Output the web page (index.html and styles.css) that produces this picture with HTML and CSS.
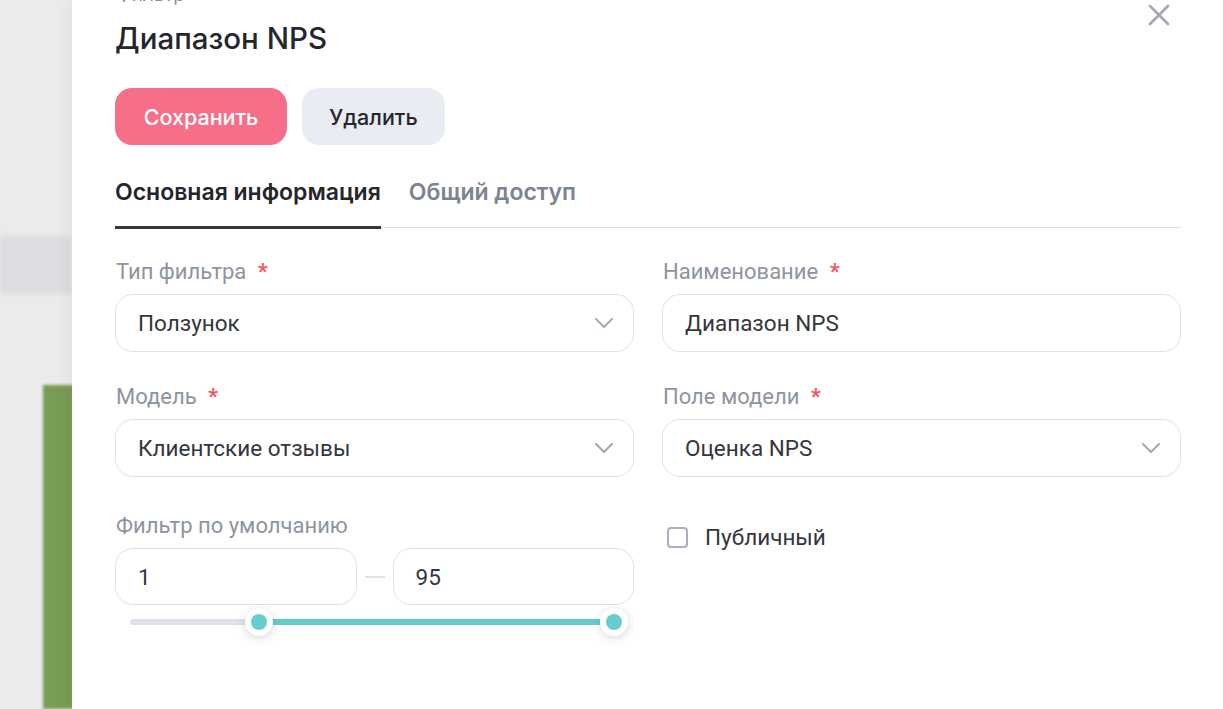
FILE: index.html
```html
<!DOCTYPE html>
<html lang="ru">
<head>
<meta charset="utf-8">
<title>Диапазон NPS</title>
<link rel="stylesheet" href="styles.css">
</head>
<body>
<div class="page">
  <div class="backdrop">
    <div class="bd-top"></div>
    <div class="bd-band"></div>
    <div class="bd-gap"></div>
    <div class="bd-row"><div class="bd-green"></div></div>
  </div>
  <div class="panel">
    <button class="close" aria-label="Закрыть">
      <svg width="24" height="24" viewBox="0 0 24 24"><path d="M3 3L21 21M21 3L3 21" stroke="#a2a6b8" stroke-width="2.6" stroke-linecap="round"/></svg>
    </button>
    <div class="head">
      <div class="kicker">Фильтр</div>
      <h1 class="title">Диапазон NPS</h1>
    </div>
    <div class="actions">
      <button class="btn btn-primary">Сохранить</button>
      <button class="btn btn-secondary">Удалить</button>
    </div>
    <div class="tabs">
      <div class="tab tab-active">Основная информация</div>
      <div class="tab">Общий доступ</div>
    </div>
    <div class="grid">
      <div class="field">
        <div class="label">Тип фильтра <span class="req">*</span></div>
        <div class="control select"><span>Ползунок</span><svg class="chev" width="20" height="12" viewBox="0 0 20 12"><path d="M2 2L10 10L18 2" fill="none" stroke="#a2a6b8" stroke-width="2" stroke-linecap="round" stroke-linejoin="round"/></svg></div>
      </div>
      <div class="field">
        <div class="label">Наименование <span class="req">*</span></div>
        <div class="control"><span>Диапазон NPS</span></div>
      </div>
      <div class="field">
        <div class="label">Модель <span class="req">*</span></div>
        <div class="control select"><span>Клиентские отзывы</span><svg class="chev" width="20" height="12" viewBox="0 0 20 12"><path d="M2 2L10 10L18 2" fill="none" stroke="#a2a6b8" stroke-width="2" stroke-linecap="round" stroke-linejoin="round"/></svg></div>
      </div>
      <div class="field">
        <div class="label">Поле модели <span class="req">*</span></div>
        <div class="control select"><span>Оценка NPS</span><svg class="chev" width="20" height="12" viewBox="0 0 20 12"><path d="M2 2L10 10L18 2" fill="none" stroke="#a2a6b8" stroke-width="2" stroke-linecap="round" stroke-linejoin="round"/></svg></div>
      </div>
      <div class="field row3">
        <div class="label">Фильтр по умолчанию</div>
        <div class="range-inputs">
          <div class="control small"><span>1</span></div>
          <div class="dash"></div>
          <div class="control small"><span>95</span></div>
        </div>
        <div class="slider">
          <div class="track-off" style="width: 125px"></div>
          <div class="thumb"><div class="dot"></div></div>
          <div class="track-on"></div>
          <div class="thumb"><div class="dot"></div></div>
        </div>
      </div>
      <div class="field row3 check-field">
        <label class="check"><span class="box"></span><span>Публичный</span></label>
      </div>
    </div>
  </div>
</div>
</body>
</html>
```

FILE: styles.css
```css
* { box-sizing: border-box; }
html, body { margin: 0; padding: 0; }
body {
  width: 1223px;
  height: 709px;
  overflow: hidden;
  font-family: "Roboto", "Inter", sans-serif;
  color: #34363b;
}
.page {
  display: flex;
  height: 709px;
}
.backdrop {
  width: 72px;
  flex: none;
  background: #ebebeb;
  display: flex;
  flex-direction: column;
  overflow: hidden;
}
.bd-top { height: 236px; }
.bd-band { height: 58px; background: #dcdde1; filter: blur(2px); }
.bd-gap { height: 91px; }
.bd-row { flex: 1; display: flex; justify-content: flex-end; }
.bd-green { width: 31px; background: #789b56; filter: blur(1.5px); margin-right: -2px; }

.panel {
  flex: 1;
  background: #fff;
  position: relative;
  padding: 0 42px 0 43px;
  box-shadow: -6px 0 14px rgba(0,0,0,0.04);
}
.close {
  position: absolute;
  top: 3px;
  right: 52px;
  width: 24px;
  height: 24px;
  padding: 0;
  border: 0;
  background: none;
}
.head { margin-top: -15px; }
.kicker {
  font-family: "Inter", sans-serif;
  font-size: 19px;
  line-height: 20px;
  color: #8a909c;
  margin-left: 1px;
}
.title {
  margin: 15px 0 0 0;
  font-family: "Inter", sans-serif;
  font-weight: 500;
  font-size: 29.5px;
  line-height: 36px;
  color: #24262b;
}
.actions {
  display: flex;
  gap: 15px;
  margin-top: 32px;
}
.btn {
  height: 57px;
  border: 0;
  border-radius: 17px;
  font-family: "Inter", sans-serif;
  font-size: 21.5px;
  font-weight: 500;
  padding: 0;
}
.btn-primary { background: #f76e89; color: #fff; width: 172px; }
.btn-secondary { background: #eaecf4; color: #25272c; width: 143px; }

.tabs {
  display: flex;
  gap: 28px;
  margin-top: 25px;
  border-bottom: 1px solid #d9dee7;
}
.tab {
  font-family: "Inter", sans-serif;
  font-weight: 600;
  font-size: 23px;
  line-height: 30px;
  padding: 7px 0 19px 0;
  color: #7c8391;
  margin-bottom: -2px;
  border-bottom: 3px solid transparent;
}
.tab-active { color: #24262b; border-bottom-color: #35373d; }

.grid {
  display: grid;
  grid-template-columns: 1fr 1fr;
  column-gap: 28px;
  row-gap: 32px;
  margin-top: 31px;
}
.field { display: flex; flex-direction: column; }
.row3 { margin-top: 4px; }
.label {
  font-size: 22px;
  line-height: 26px;
  color: #8d94a1;
  margin: 0 0 9px 1px;
}
.req { color: #f4585f; margin-left: 6px; font-weight: 700; }
.control {
  height: 58px;
  border: 1px solid #dde1ea;
  border-radius: 18px;
  display: flex;
  align-items: center;
  justify-content: space-between;
  padding: 0 19px 0 22px;
  font-size: 22.5px;
  color: #34363b;
}
.chev { flex: none; }
.range-inputs {
  display: flex;
  align-items: center;
  gap: 8px;
}
.control.small { flex: 1; height: 57px; }
.dash { width: 20px; height: 2px; background: #dde1ea; }
.slider {
  display: flex;
  align-items: center;
  height: 34px;
  padding: 0 6px 0 15px;
}
.track-off { height: 6px; background: #dde1e8; border-radius: 3px 0 0 3px; margin-right: -10px; }
.track-on { flex: 1; height: 6px; background: #66cdca; margin: 0 -10px; }
.thumb {
  width: 28px;
  height: 28px;
  border-radius: 50%;
  background: #fff;
  box-shadow: 0 2px 8px rgba(30, 40, 60, 0.18);
  display: flex;
  align-items: center;
  justify-content: center;
  position: relative;
  z-index: 1;
  flex: none;
}
.dot { width: 16px; height: 16px; border-radius: 50%; background: #66cdca; }

.check-field { padding-top: 9px; }
.check {
  display: flex;
  align-items: center;
  gap: 17px;
  margin-left: 5px;
  font-size: 22.5px;
  color: #34363b;
  height: 30px;
}
.box {
  width: 21px;
  height: 21px;
  border: 2px solid #a9aec0;
  border-radius: 4px;
}
```
